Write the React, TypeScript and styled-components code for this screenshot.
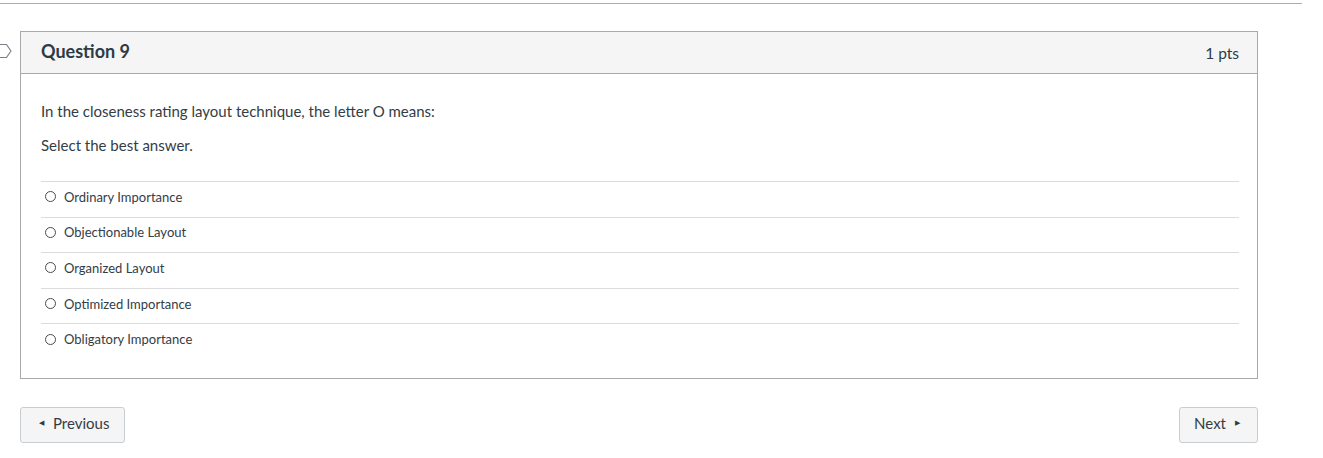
import * as React from "react";
import styled, { createGlobalStyle } from "styled-components";

const GlobalStyle = createGlobalStyle`
  html, body {
    margin: 0;
    padding: 0;
    background: #ffffff;
    font-family: Lato, "Open Sans", "Liberation Sans", sans-serif;
    color: #2d3b45;
  }
`;

const Page = styled.div`
  width: 1323px;
  padding-top: 3px;
`;

const TopRule = styled.div`
  width: 1302px;
  height: 1px;
  background: #adadad;
`;

const QuestionRow = styled.div`
  position: relative;
  margin-top: 27px;
  padding-left: 20px;
`;

const Flag = styled.svg`
  position: absolute;
  left: -5px;
  top: 11px;
`;

const QuestionBox = styled.div`
  width: 1238px;
  box-sizing: border-box;
  border: 1px solid #a9a9a9;
  background: #fff;
`;

const Header = styled.div`
  height: 42px;
  box-sizing: border-box;
  display: flex;
  align-items: center;
  justify-content: space-between;
  padding: 0 18px 0 20px;
  background: #f5f5f5;
  border-bottom: 1px solid #a9a9a9;
`;

const Title = styled.h2`
  margin: 0;
  font-size: 18px;
  font-weight: 700;
  color: #2d3b45;
  padding-bottom: 3px;
`;

const Points = styled.div`
  font-size: 15.5px;
  color: #2d3b45;
  padding-top: 1px;
`;

const Body = styled.div`
  padding: 27px 18px 19px 20px;
`;

const Prompt = styled.p<{ $gap: number }>`
  margin: 0 0 ${(p) => p.$gap}px;
  font-size: 15px;
  line-height: 20px;
  color: #333d45;
`;

const Answers = styled.div`
  display: flex;
  flex-direction: column;
`;

const Answer = styled.label`
  display: flex;
  align-items: center;
  height: 35.6px;
  box-sizing: border-box;
  border-top: 1px solid #dcdcdc;
  padding: 0 0 5px 4px;
  font-size: 13px;
  color: #333d45;
  cursor: pointer;
`;

const Radio = styled.span`
  width: 9px;
  height: 9px;
  border: 1.2px solid #4a4a4a;
  border-radius: 50%;
  margin-right: 8px;
  flex-shrink: 0;
`;

const Nav = styled.div`
  width: 1238px;
  margin: 28px 0 0 20px;
  display: flex;
  justify-content: space-between;
`;

const NavButton = styled.button<{ $left: number; $right: number }>`
  height: 36px;
  box-sizing: border-box;
  padding: 0 ${(p) => p.$right}px 4px ${(p) => p.$left}px;
  display: flex;
  align-items: center;
  gap: 9px;
  background: #f5f5f5;
  border: 1px solid #c7cdd1;
  border-radius: 3px;
  font-family: Lato, "Liberation Sans", sans-serif;
  font-size: 15px;
  color: #333d45;
  cursor: pointer;
`;

const Caret = styled.span`
  font-size: 6.5px;
  color: #2d3b45;
`;

const answers = [
  "Ordinary Importance",
  "Objectionable Layout",
  "Organized Layout",
  "Optimized Importance",
  "Obligatory Importance",
];

const App: React.FC = () => {
  return (
    <Page>
      <GlobalStyle />
      <TopRule />
      <QuestionRow>
        <Flag width="18" height="18" viewBox="0 0 18 18">
          <path
            d="M1 2.5 H11.5 L16 9 L11.5 15.5 H1 Z"
            fill="none"
            stroke="#7a8088"
            strokeWidth="1.2"
            strokeLinejoin="round"
          />
        </Flag>
        <QuestionBox>
          <Header>
            <Title>Question 9</Title>
            <Points>1 pts</Points>
          </Header>
          <Body>
            <Prompt $gap={14}>
              In the closeness rating layout technique, the letter O means:
            </Prompt>
            <Prompt $gap={26}>Select the best answer.</Prompt>
            <Answers>
              {answers.map((a) => (
                <Answer key={a}>
                  <Radio />
                  {a}
                </Answer>
              ))}
            </Answers>
          </Body>
        </QuestionBox>
      </QuestionRow>
      <Nav>
        <NavButton $left={18} $right={15}>
          <Caret>◀</Caret>
          Previous
        </NavButton>
        <NavButton $left={14} $right={17}>
          Next
          <Caret>▶</Caret>
        </NavButton>
      </Nav>
    </Page>
  );
};

export default App;
